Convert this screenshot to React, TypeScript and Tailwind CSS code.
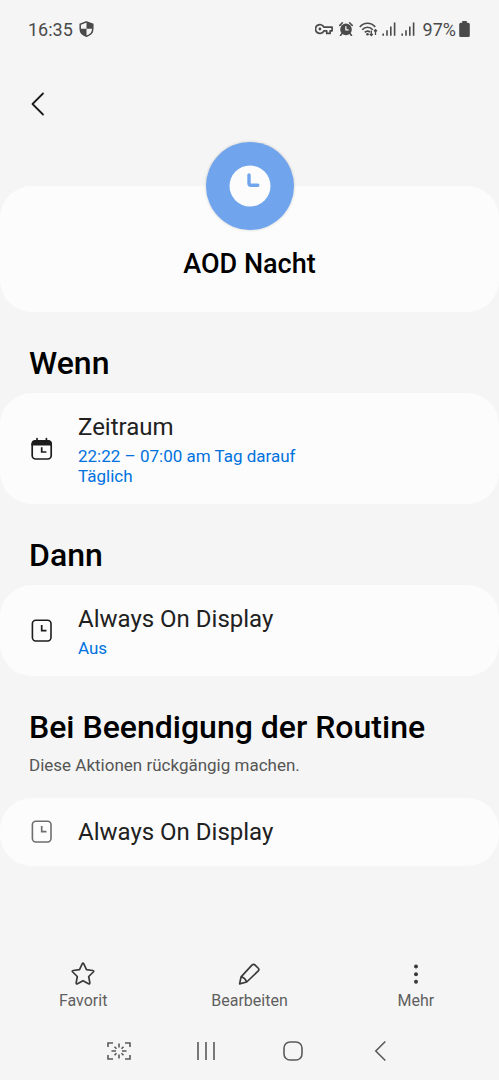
import type { ReactNode } from "react";

const CalendarClockIcon = () => (
    <svg className="h-6 w-6" viewBox="0 0 24 24" fill="none" stroke="currentColor" strokeWidth="1.7">
        <rect x="2.2" y="4" width="19" height="18" rx="3.5" />
        <path d="M1.400 8.400V7a3.900 3.900 0 0 1 3.900-3.900h12.800A3.900 3.900 0 0 1 22 7v1.400z" fill="currentColor" stroke="none" />
        <path d="M7 1.600v4M16.400 1.600v4" strokeLinecap="round" />
        <path d="M11.700 10.200v4.800h4.700" />
    </svg>
);

const ClockSquareIcon = () => (
    <svg className="h-6 w-6" viewBox="0 0 24 24" fill="none" stroke="currentColor" strokeWidth="1.600">
        <rect x="2.400" y="1.200" width="18.600" height="20.800" rx="3.400" />
        <path d="M11.700 6v5.600h4.800" strokeWidth="1.700" />
    </svg>
);

const signalBars = (
    <svg className="h-4 w-4" viewBox="0 0 16 16" fill="none" stroke="currentColor" strokeWidth="1.6">
        <path d="M2.2 12.400v2.400M6 9.200v5.600M9.800 5.600v9.200M13.600 1.600v13.200" />
    </svg>
);

function StatusBar() {
    return (
        <div className="flex h-[58px] items-center justify-between pl-7 pr-[29px] text-[18px] text-[#4a4a4a]">
            <div className="flex items-center gap-[6px]">
                <span>16:35</span>
                <svg className="h-4 w-[15px]" viewBox="0 0 15 16">
                    <path d="M7.500.900l6.300 2.300v4.600c0 3.500-2.500 6.300-6.300 7.400C3.700 14.100 1.200 11.300 1.200 7.800V3.200z" fill="#f5f5f5" stroke="currentColor" strokeWidth="1.500" />
                    <path d="M7.500.900l6.300 2.300v4.600H7.500zM1.200 7.800h6.300v7.400C3.700 14.100 1.200 11.300 1.200 7.800z" fill="currentColor" />
                </svg>
            </div>
            <div className="flex items-center gap-[3px]">
                <svg className="mr-[3px] h-3 w-[18px]" viewBox="0 0 18 12" fill="none" stroke="currentColor" strokeWidth="1.700">
                    <path d="M8.900 4.200A4.400 4.400 0 1 0 8.900 7.800H11.700v2.600h3.400V7.800h2V4.200z" strokeLinejoin="round" />
                    <circle cx="4.900" cy="6" r="1.400" fill="currentColor" stroke="none" />
                </svg>
                <svg className="mr-[3px] h-[14px] w-[14px]" viewBox="0 0 14 14" fill="none" stroke="currentColor" strokeWidth="1.500">
                    <circle cx="7" cy="7.400" r="5.800" fill="currentColor" stroke="none" />
                    <path d="M.8 3.400l2.600-2.600M13.200 3.400L10.600.8M3 11.500l-1.500 2M11 11.500l1.500 2" strokeLinecap="round" />
                    <path d="M6.900 4.200v3.700h2.800" stroke="#f5f5f5" strokeWidth="1.300" />
                </svg>
                <svg className="h-4 w-[19px]" viewBox="0 0 19 16" fill="none" stroke="currentColor" strokeWidth="1.700">
                    <path d="M.8 6C5 1 12 1 16.200 6M3.200 8.800c3-3.400 7.600-3.400 10.600 0M5.800 11.400c1.600-1.700 3.800-1.700 5.200-.2" />
                    <circle cx="8.500" cy="13.300" r="1.300" fill="currentColor" stroke="none" />
                    <path d="M12.300 9.500v5M10.800 13l1.500 1.600L13.800 13M16.500 14V8.600M15 10.200l1.500-1.600L18 10.200" strokeWidth="1.300" />
                </svg>
                {signalBars}
                {signalBars}
                <span className="ml-1">97%</span>
                <svg className="h-4 w-[11px]" viewBox="0 0 11 16" fill="currentColor">
                    <path d="M3.200 0h4.600v1.800h1.400A1.600 1.600 0 0 1 10.800 3.400v11A1.600 1.600 0 0 1 9.200 16H1.800A1.600 1.600 0 0 1 .2 14.400v-11A1.600 1.600 0 0 1 1.800 1.800h1.400z" />
                </svg>
            </div>
        </div>
    );
}

type RoutineCardProps = {
    icon: ReactNode;
    title: string;
    details?: string[];
    muted?: boolean;
};

function RoutineCard({ icon, title, details, muted }: RoutineCardProps) {
    return (
        <div className="flex items-center rounded-[32px] bg-[#fcfcfc] pl-[30px] pr-[29px] py-[18px]">
            <span className={muted ? "mr-6 text-[#6e6e6e]" : "mr-6 text-[#1c1c1c]"}>{icon}</span>
            <div>
                <h3 className="text-[24px] leading-8 text-[#212121]">{title}</h3>
                {details && (
                    <div className="mt-[3px] text-[17px] leading-5 text-[#0072de]">
                        {details.map((line) => (
                            <p key={line}>{line}</p>
                        ))}
                    </div>
                )}
            </div>
        </div>
    );
}

function SectionTitle({ children }: { children: ReactNode }) {
    return <h2 className="px-[29px] pt-[31px] text-[32px] font-medium leading-10 text-black">{children}</h2>;
}

const actions = [
    {
        label: "Favorit",
        icon: (
            <path
                d="M11.200 1.900q.8-1.400 1.600 0l2.700 5.700 6.300.9q1.600.3.500 1.500l-4.600 4.500 1.100 6.200q.2 1.700-1.300 1L12 18.700l-5.500 3q-1.500.7-1.300-1l1.100-6.200-4.600-4.500q-1.100-1.200.5-1.500l6.300-.9z"
                strokeLinejoin="round"
            />
        ),
    },
    {
        label: "Bearbeiten",
        icon: (
            <path
                d="M2.600 21.900l1.500-7.100L14.900 3.200c1-1 2.300-1 3.200-.1l3 2.900c.9.900.9 2.200-.1 3.200L9.700 20zM4.100 14.800c2.500.6 4.700 2.600 5.600 5.200"
                strokeLinejoin="round"
            />
        ),
    },
    {
        label: "Mehr",
        icon: (
            <g fill="currentColor" stroke="none">
                <circle cx="12" cy="4.600" r="2" />
                <circle cx="12" cy="12.200" r="2" />
                <circle cx="12" cy="19.800" r="2" />
            </g>
        ),
    },
];

const navItems = [
    { label: "Screenshot", path: "M1 8V4h5M18 4h5v4M23 16v4h-5M6 20H1v-4M12 4.500v4M12 15.500v4M4.500 12h4.500M15 12h4.500M7.500 7.800l2 2M16.500 7.800l-2 2M7.500 16.200l2-2M16.500 16.200l-2-2" },
    { label: "Letzte Apps", path: "M4 3v18M12 3v18M20 3v18" },
    { label: "Startseite", path: "M9 3h6a6 6 0 0 1 6 6v6a6 6 0 0 1-6 6H9a6 6 0 0 1-6-6V9a6 6 0 0 1 6-6z" },
    { label: "Zurück", path: "M17.300 2.500L7.800 12l9.500 9.500" },
];

export default function App() {
    return (
        <div className="flex min-h-screen flex-col bg-[#f5f5f5] font-[Roboto,sans-serif]">
            <StatusBar />

            <header className="flex h-[92px] items-center px-[26px]">
                <button type="button" aria-label="Zurück" className="text-[#1c1c1c]">
                    <svg className="h-6 w-6" viewBox="0 0 24 24" fill="none" stroke="currentColor" strokeWidth="1.800" strokeLinecap="round" strokeLinejoin="round">
                        <path d="M17 1.500L6.500 12 17 22.500" />
                    </svg>
                </button>
            </header>

            <main className="flex-1">
                {/* Routine name with the icon hanging over the card edge */}
                <section className="mt-9 flex flex-col items-center rounded-[32px] bg-[#fcfcfc] pb-8">
                    <div className="-mt-11 flex h-[88px] w-[88px] items-center justify-center rounded-full bg-[#70a5ee] shadow-[0_0_3px_rgba(0,0,0,0.2)]">
                        <svg className="h-[42px] w-[42px]" viewBox="0 0 42 42" fill="none">
                            <circle cx="21" cy="21" r="20.500" fill="#fcfcfc" />
                            <path d="M20 10v8.300q0 2 2 2h6.800" stroke="#70a5ee" strokeWidth="3.400" strokeLinecap="round" />
                        </svg>
                    </div>
                    <h1 className="mt-[18px] text-[27px] font-medium leading-8 text-black">AOD Nacht</h1>
                </section>

                <section>
                    <SectionTitle>Wenn</SectionTitle>
                    <div className="mt-[10px]">
                        <RoutineCard
                            icon={<CalendarClockIcon />}
                            title="Zeitraum"
                            details={["22:22 – 07:00 am Tag darauf", "Täglich"]}
                        />
                    </div>
                </section>

                <section>
                    <SectionTitle>Dann</SectionTitle>
                    <div className="mt-[10px]">
                        <RoutineCard icon={<ClockSquareIcon />} title="Always On Display" details={["Aus"]} />
                    </div>
                </section>

                <section>
                    <SectionTitle>Bei Beendigung der Routine</SectionTitle>
                    <p className="mb-[21px] mt-[6px] px-[29px] text-[17px] leading-6 text-[#555555]">
                        Diese Aktionen rückgängig machen.
                    </p>
                    <RoutineCard icon={<ClockSquareIcon />} title="Always On Display" muted />
                </section>
            </main>

            <footer>
                <div className="grid grid-cols-3 pb-[9px]">
                    {actions.map((action) => (
                        <button key={action.label} type="button" className="flex flex-col items-center gap-[3px] text-[#3a3a3a]">
                            <svg className="h-6 w-6" viewBox="0 0 24 24" fill="none" stroke="currentColor" strokeWidth="1.700">
                                {action.icon}
                            </svg>
                            <span className="text-[16px] leading-6 text-[#5f5f5f]">{action.label}</span>
                        </button>
                    ))}
                </div>
                <nav className="grid h-[58px] grid-cols-4 items-center px-[15%]">
                    {navItems.map((item) => (
                        <button key={item.label} type="button" aria-label={item.label} className="flex justify-center text-[#5a5a5a]">
                            <svg className="h-6 w-6" viewBox="0 0 24 24" fill="none" stroke="currentColor" strokeWidth="1.600">
                                <path d={item.path} />
                            </svg>
                        </button>
                    ))}
                </nav>
            </footer>
        </div>
    );
}
